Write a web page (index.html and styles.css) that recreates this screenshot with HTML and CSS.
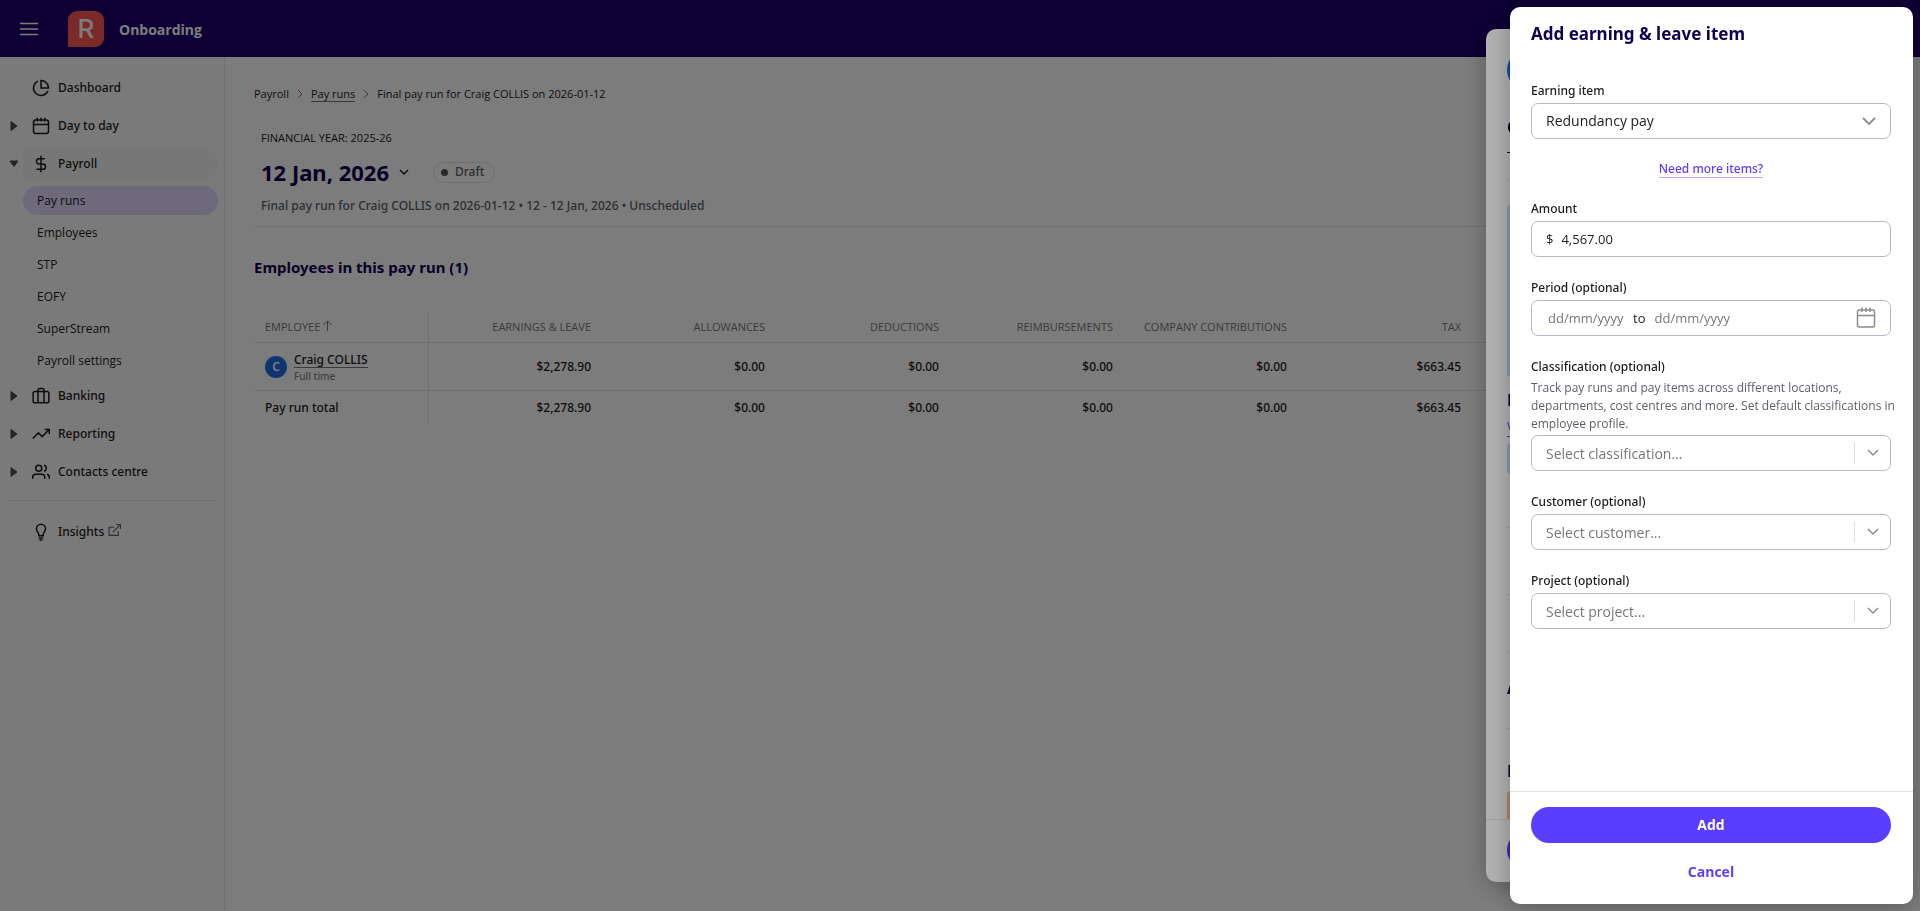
FILE: index.html
```html
<!DOCTYPE html>
<html lang="en">
<head>
<meta charset="utf-8">
<title>Onboarding – Pay run</title>
<link rel="stylesheet" href="styles.css">
</head>
<body>
<div class="app">
  <header class="topbar">
    <button class="menu-btn" aria-label="Menu"><svg width="18" height="14" viewBox="0 0 18 14"><path d="M0 1.500h18M0 7h18M0 12.500h18" stroke="currentColor" stroke-width="1.400"/></svg></button>
    <span class="logo">R</span>
    <span class="org">Onboarding</span>
  </header>
  <div class="body">
    <nav class="sidebar" aria-label="Main">
      <a class="nav-item" href="#"><span class="caret"></span><svg class="icon" viewBox="0 0 24 24"><path d="M21.200 15.900A10 10 0 1 1 8 2.800"/><path d="M22 12A10 10 0 0 0 12 2v10z"/></svg>Dashboard</a>
      <a class="nav-item" href="#"><svg class="caret" viewBox="0 0 8 10"><path d="M1 0.500v9L7 5z"/></svg><svg class="icon" viewBox="0 0 24 24"><rect x="2" y="4" width="20" height="18" rx="3"/><path d="M7 1v5M12 1v5M17 1v5M2 10h20"/></svg>Day to day</a>
      <a class="nav-item open" href="#"><svg class="caret down" viewBox="0 0 10 8"><path d="M1 1h8L5 6.500z"/></svg><svg class="icon" viewBox="0 0 24 24"><path d="M12 1v22M17 5H9.500a3.500 3.500 0 0 0 0 7h5a3.500 3.500 0 0 1 0 7H6"/></svg>Payroll</a>
      <div class="subnav">
        <a class="sub active" href="#">Pay runs</a>
        <a class="sub" href="#">Employees</a>
        <a class="sub" href="#">STP</a>
        <a class="sub" href="#">EOFY</a>
        <a class="sub" href="#">SuperStream</a>
        <a class="sub" href="#">Payroll settings</a>
      </div>
      <a class="nav-item" href="#"><svg class="caret" viewBox="0 0 8 10"><path d="M1 0.500v9L7 5z"/></svg><svg class="icon" viewBox="0 0 24 24"><rect x="1.500" y="6" width="21" height="15" rx="2.500"/><path d="M8 21V4a2 2 0 0 1 2-2h4a2 2 0 0 1 2 2v17"/></svg>Banking</a>
      <a class="nav-item" href="#"><svg class="caret" viewBox="0 0 8 10"><path d="M1 0.500v9L7 5z"/></svg><svg class="icon" viewBox="0 0 24 24"><path d="M23 6l-9.500 9.500-5-5L1 18"/><path d="M17 6h6v6"/></svg>Reporting</a>
      <a class="nav-item" href="#"><svg class="caret" viewBox="0 0 8 10"><path d="M1 0.500v9L7 5z"/></svg><svg class="icon" viewBox="0 0 24 24"><path d="M17 21v-2a4 4 0 0 0-4-4H5a4 4 0 0 0-4 4v2"/><circle cx="9" cy="7" r="4"/><path d="M23 21v-2a4 4 0 0 0-3-3.870M16 3.130a4 4 0 0 1 0 7.750"/></svg>Contacts centre</a>
      <hr class="nav-rule">
      <a class="nav-item" href="#"><span class="caret"></span><svg class="icon" viewBox="0 0 24 24"><path d="M9 17v-2c0-2.500-3-3.500-3-7.500a6 6 0 0 1 12 0c0 4-3 5-3 7.500v2zM9 20h6M10 22.800h4"/></svg>Insights<svg class="ext" viewBox="0 0 24 24"><path d="M19 13v8H2V6h9M15 1h8v8M23 1L9 15"/></svg></a>
    </nav>
    <main class="main">
      <nav class="crumbs" aria-label="Breadcrumb">
        <span class="strong">Payroll</span>
        <svg viewBox="0 0 6 10"><path d="M1 1l4 4-4 4"/></svg>
        <a class="strong" href="#">Pay runs</a>
        <svg viewBox="0 0 6 10"><path d="M1 1l4 4-4 4"/></svg>
        <span>Final pay run for Craig COLLIS on 2026-01-12</span>
      </nav>
      <section class="run-head">
        <p class="fy">FINANCIAL YEAR: 2025-26</p>
        <div class="run-title">
          <h1>12 Jan, 2026</h1>
          <button class="title-btn" aria-label="Change pay run"><svg width="10" height="7" viewBox="0 0 10 7"><path d="M1 1l4 4 4-4"/></svg></button>
          <span class="pill">Draft</span>
        </div>
        <p class="desc">Final pay run for Craig COLLIS on 2026-01-12 • 12 - 12 Jan, 2026 • Unscheduled</p>
      </section>
      <h2>Employees in this pay run (1)</h2>
      <table class="runs">
        <thead>
          <tr><th scope="col">EMPLOYEE <svg class="sort" viewBox="0 0 9 11"><path d="M4.500 11V1M.5 5l4-4 4 4"/></svg></th><th scope="col">EARNINGS &amp; LEAVE</th><th scope="col">ALLOWANCES</th><th scope="col">DEDUCTIONS</th><th scope="col">REIMBURSEMENTS</th><th scope="col">COMPANY CONTRIBUTIONS</th><th scope="col">TAX</th><td class="rest"></td></tr>
        </thead>
        <tbody>
          <tr><td><div class="person"><span class="avatar">C</span><div><a href="#">Craig COLLIS</a><small>Full time</small></div></div></td><td>$2,278.90</td><td>$0.00</td><td>$0.00</td><td>$0.00</td><td>$0.00</td><td>$663.45</td><td class="rest"></td></tr>
          <tr><td>Pay run total</td><td>$2,278.90</td><td>$0.00</td><td>$0.00</td><td>$0.00</td><td>$0.00</td><td>$663.45</td><td class="rest"></td></tr>
        </tbody>
      </table>
    </main>
  </div>
</div>

<div class="backdrop"></div>
<aside class="drawer back">
  <div class="back-body">
    <span class="back-avatar"></span>
    <b class="back-h first">C</b>
    <span class="back-dash"></span>
    <span class="back-rule"></span>
    <span class="back-card tall"></span>
    <b class="back-h">E</b>
    <a class="back-link" href="#">V</a>
    <span class="back-card"></span>
    <span class="back-rule r1"></span>
    <span class="back-rule r2"></span>
    <span class="back-rule r3"></span>
    <b class="back-h">A</b>
    <span class="back-rule r4"></span>
    <b class="back-h">P</b>
    <span class="back-card warn"></span>
  </div>
  <div class="back-foot"><span class="back-btn"></span></div>
</aside>
<div class="backdrop"></div>

<form class="drawer front" role="dialog" aria-labelledby="dlg-title">
  <h2 id="dlg-title">Add earning &amp; leave item</h2>
  <div class="fields">
    <div class="field">
      <label for="item">Earning item</label>
      <div class="control">
        <select id="item"><option>Redundancy pay</option></select>
        <svg class="chev" width="14" height="9" viewBox="0 0 14 9"><path d="M1 1l6 6 6-6"/></svg>
      </div>
    </div>
    <a class="more" href="#">Need more items?</a>
    <div class="field">
      <label for="amount">Amount</label>
      <div class="control"><span class="prefix">$</span><input id="amount" type="text" value="4,567.00"></div>
    </div>
    <div class="field">
      <label for="from">Period (optional)</label>
      <div class="control">
        <input class="date first-date" id="from" type="text" placeholder="dd/mm/yyyy">
        <span class="to">to</span>
        <input class="date" type="text" placeholder="dd/mm/yyyy" aria-label="Period end">
        <button class="cal" type="button" aria-label="Open calendar"><svg width="20" height="22" viewBox="0 0 20 22"><rect x="1.500" y="3" width="17" height="17" rx="1.500"/><path d="M6 .5V5M10 .5V5M14 .5V5M2 8.500h16"/></svg></button>
      </div>
    </div>
    <div class="field">
      <label for="cls">Classification (optional)</label>
      <p class="help">Track pay runs and pay items across different locations, departments, cost centres and more. Set default classifications in employee profile.</p>
      <div class="control"><input id="cls" type="text" placeholder="Select classification..."><button class="drop" type="button" aria-label="Show classifications"><svg width="12" height="8" viewBox="0 0 12 8"><path d="M1 1l5 5 5-5"/></svg></button></div>
    </div>
    <div class="field">
      <label for="cust">Customer (optional)</label>
      <div class="control"><input id="cust" type="text" placeholder="Select customer..."><button class="drop" type="button" aria-label="Show customers"><svg width="12" height="8" viewBox="0 0 12 8"><path d="M1 1l5 5 5-5"/></svg></button></div>
    </div>
    <div class="field">
      <label for="proj">Project (optional)</label>
      <div class="control"><input id="proj" type="text" placeholder="Select project..."><button class="drop" type="button" aria-label="Show projects"><svg width="12" height="8" viewBox="0 0 12 8"><path d="M1 1l5 5 5-5"/></svg></button></div>
    </div>
  </div>
  <footer class="actions">
    <button class="primary" type="submit">Add</button>
    <button class="plain" type="button">Cancel</button>
  </footer>
</form>
</body>
</html>
```
FILE: styles.css
```css
* { box-sizing: border-box; }
body {
  margin: 0;
  font: 400 12px/18px "Open Sans", "Noto Sans", sans-serif;
  color: #1b1b20;
}
button, input, select { font: inherit; color: inherit; }
button { background: none; border: 0; padding: 0; cursor: pointer; }
a { color: inherit; text-decoration: none; }
h1, h2, p { margin: 0; }
svg { fill: none; stroke: currentColor; stroke-width: 2; flex: none; }
h1, h2, .nav-item, .pill, .desc, .runs td, .field label, .more {
  font-family: "Noto Sans", "Open Sans", sans-serif;
}

.app { min-height: 100vh; display: flex; flex-direction: column; background: #fff; }
.topbar {
  height: 57px; display: flex; align-items: center; padding: 0 20px;
  background: #1d006e; color: #fff;
}
.menu-btn { display: flex; margin-right: 30px; }
.logo {
  width: 36px; height: 36px; border-radius: 9px 9px 9px 0; background: #ff5850;
  display: flex; align-items: center; justify-content: center;
  font: 500 26px/36px Inter, sans-serif; margin-right: 15px;
}
.org { font-weight: 700; font-size: 14px; padding-top: 3px; }

.body { flex: 1; display: flex; }
.sidebar {
  width: 225px; flex: none; padding: 15px 6px 0 7px;
  background: #fbfbfb; border-right: 1px solid #e2e0ec;
}
.nav-item {
  display: flex; align-items: center; height: 32px; margin-bottom: 6px;
  font-weight: 500; border-radius: 16px;
}
.nav-item.open {
  background: linear-gradient(#f5f5f5, #f5f5f5) right / 195px no-repeat;
}
.caret { width: 14px; height: 10px; margin-right: 11px; fill: #4c4c55; stroke: #4c4c55; stroke-width: 1; }
.caret.down { height: 8px; }
.icon { width: 18px; height: 18px; margin-right: 8px; }
.ext { width: 13px; height: 13px; margin: 0 0 4px 4px; color: #5c5f66; }
.subnav { display: grid; gap: 3px; margin: 0 0 5px 16px; }
.sub { height: 29px; line-height: 29px; padding-left: 14px; border-radius: 15px; }
.sub.active { background: #e2d8fd; }
.nav-rule { border: 0; border-top: 1px solid #e4e4e8; margin: 12px 0 15px; }

.main { flex: 1; min-width: 0; padding: 28px 30px 0 29px; }
.crumbs { display: flex; align-items: center; gap: 8px; font-size: 11px; }
.crumbs svg { width: 6px; height: 10px; stroke: #77777f; stroke-width: 1; }
.crumbs .strong { font-weight: 500; }
.crumbs a { border-bottom: 1px solid #77777f; line-height: 14px; }
.run-head { margin-top: 26px; padding: 0 7px 11px; border-bottom: 1px solid #e4e4e8; }
.fy { font-size: 11px; }
.run-title { display: flex; align-items: center; height: 50px; }
h1 { font-size: 22px; line-height: 28px; color: #10004f; }
.title-btn { display: flex; margin: 0 24px 0 10px; }
.title-btn svg { stroke-width: 1.500; }
.pill {
  display: flex; align-items: center; gap: 7px; height: 21px; padding: 0 10px 0 7px;
  border: 1px solid #e4e4e8; border-radius: 11px; color: #5c5f66; font-weight: 500;
}
.pill::before { content: ""; width: 7px; height: 7px; border-radius: 50%; background: #55555e; }
.desc { color: #5c5f66; font-weight: 500; }
.main h2 { margin: 28px 0 34px; font-size: 15px; line-height: 24px; color: #10004f; }

.runs { width: 100%; border-collapse: collapse; table-layout: fixed; text-align: right; font-weight: 500; }
.runs th, .runs td { width: 174px; padding: 0 11px; white-space: nowrap; border-bottom: 1px solid #e4e4e8; }
.runs .rest { width: auto; }
.runs th { height: 29px; font-size: 11px; font-weight: 500; color: #77777f; }
.runs td { height: 48px; padding-top: 1px; }
.runs thead td { height: 29px; }
.runs tbody tr:last-child td { height: 33px; padding-top: 2px; border-bottom: 0; }
.runs tr > :first-child { text-align: left; border-right: 1px solid #e4e4e8; }
.sort { width: 9px; height: 11px; stroke-width: 1; }
.person { display: flex; align-items: center; gap: 7px; }
.person a { display: inline-block; line-height: 15px; border-bottom: 1px solid #77777f; }
.person small { display: block; font-size: 10px; line-height: 14px; color: #84848c; }
.avatar {
  width: 22px; height: 22px; border-radius: 50%; background: #1f6feb; color: #fff;
  font-weight: 600; line-height: 22px; text-align: center;
}

.backdrop { position: fixed; inset: 0; background: rgba(0, 0, 0, .3); }
.drawer {
  position: fixed; width: 403px; background: #fff; border-radius: 10px;
  display: flex; flex-direction: column; overflow: hidden;
  box-shadow: 0 2px 24px rgba(0, 0, 0, .3);
}
.drawer.back { top: 29px; right: 31px; bottom: 29px; }
.back-body { flex: 1; min-height: 0; overflow: hidden; padding: 20px 21px 0; display: flex; flex-direction: column; }
.back-body > * { flex: none; }
.back-avatar { width: 42px; height: 42px; border-radius: 50%; background: #1f6feb; }
.back-h { font-size: 16px; line-height: 24px; color: #10004f; }
.back-h.first { margin-top: 24px; }
.back-dash { width: 12px; margin: 13px 0 27px; border-top: 1px solid #1b1b20; }
.back-rule { border-top: 1px solid #e4e4e8; }
.back-card { height: 31px; border-radius: 4px; background: #c4ddfb; }
.back-card.tall { height: 172px; margin: 24px 0 11px; }
.back-link { margin: 6px 0; align-self: flex-start; color: #5a3dff; border-bottom: 1px solid #5a3dff; }
.back-rule.r1 { margin-top: 53px; }
.back-rule.r2 { margin-top: 66px; }
.back-rule.r3 { margin: 57px 0 23px; }
.back-rule.r4 { margin: 28px 0 30px; }
.back-card.warn { height: 60px; margin-top: 8px; background: #f7c897; }
.back-foot { height: 63px; padding: 12px 21px; border-top: 1px solid #e4e4e8; }
.back-btn { display: block; height: 36px; border-radius: 18px; background: #5a3dff; }

.drawer.front { top: 7px; right: 7px; bottom: 7px; }
.front h2 { padding: 15px 21px 0; font-size: 17px; line-height: 24px; color: #10004f; }
.fields { flex: 1; min-height: 0; overflow: hidden; padding: 35px 22px 0 21px; display: flex; flex-direction: column; gap: 21px; }
.field { display: flex; flex-direction: column; gap: 2px; }
.field label { line-height: 20px; font-weight: 500; }
.control {
  display: flex; align-items: center; height: 36px; padding: 0 14px;
  border: 1px solid #b9b6c9; border-radius: 7px; font-size: 14px;
}
.control input { flex: 1; min-width: 0; height: 32px; border: 0; padding: 0; background: none; outline: 0; }
.control input::placeholder { color: #77777b; opacity: 1; }
.control select { flex: 1; height: 32px; border: 0; padding: 0; background: none; appearance: none; outline: 0; }
.chev, .drop, .cal { color: #8b8b90; }
.control #amount, .prefix, .control .date, .to { font-size: 13px; }
.prefix { margin-right: 8px; }
.control .date { flex: none; width: 80px; }
.control .first-date { margin-left: 2px; }
.to { margin: 0 9px 0 5px; }
.cal { display: flex; margin-left: auto; }
.cal svg { stroke-width: 1.500; }
.chev { stroke-width: 1.800; }
.drop { display: flex; height: 22px; align-items: center; padding-left: 12px; margin-right: -3px; border-left: 1px solid #dcdce2; }
.drop svg { stroke-width: 1.500; }
.more { align-self: center; height: 18px; line-height: 18px; font-weight: 500; color: #5a3dff; border-bottom: 1px solid #b5a8ff; }
.help { margin-right: -8px; line-height: 18px; color: #5c5f66; }
.actions { display: flex; flex-direction: column; gap: 11px; padding: 15px 22px 14px 21px; border-top: 1px solid #e0e0e4; }
.primary, .plain { height: 36px; border-radius: 18px; font-size: 14px; font-weight: 700; }
.primary { background: #5a3dff; color: #fff; }
.plain { color: #5a3dff; }
```
